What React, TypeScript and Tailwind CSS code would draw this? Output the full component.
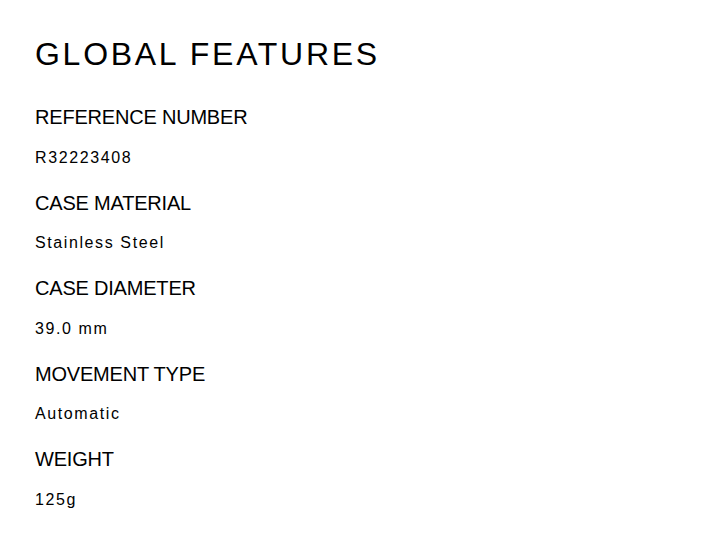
const FEATURES: { label: string; value: string }[] = [
  { label: "REFERENCE NUMBER", value: "R32223408" },
  { label: "CASE MATERIAL", value: "Stainless Steel" },
  { label: "CASE DIAMETER", value: "39.0 mm" },
  { label: "MOVEMENT TYPE", value: "Automatic" },
  { label: "WEIGHT", value: "125g" },
];

export default function App() {
  return (
    <div
      className="min-h-screen bg-white text-black px-[35px] pt-[36px]"
      style={{ fontFamily: '"Liberation Sans", Arial, sans-serif' }}
    >
      <h1 className="text-[32px] leading-[36px] tracking-[0.085em] mb-[31px]">
        GLOBAL FEATURES
      </h1>
      <div className="flex flex-col gap-[19px]">
        {FEATURES.map((f) => (
          <div key={f.label}>
            <div className="text-[20px] leading-[28px] tracking-[-0.01em] mb-[14.5px]">{f.label}</div>
            <div className="text-[16px] leading-[24px] tracking-[0.1em]">{f.value}</div>
          </div>
        ))}
      </div>
    </div>
  );
}
